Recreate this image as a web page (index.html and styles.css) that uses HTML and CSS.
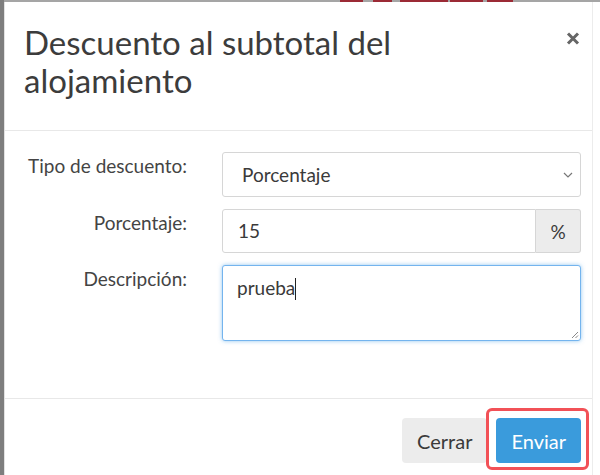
FILE: index.html
```html
<!DOCTYPE html>
<html lang="es">
<head>
  <meta charset="UTF-8" />
  <title>Descuento al subtotal del alojamiento</title>
  <link rel="stylesheet" href="styles.css">
</head>
<body>

<div class="page">
  <div class="backdrop-edge"></div>
  <div class="main">
    <div class="topline">
      <span class="seg" style="margin-left:336px;width:23px"></span>
      <span class="seg" style="margin-left:10px;width:19px"></span>
      <span class="seg" style="margin-left:8px;width:48px"></span>
      <span class="seg" style="margin-left:2px;width:33px"></span>
      <span class="seg" style="margin-left:4px;width:26px"></span>
    </div>

    <div class="modal">
      <div class="modal-header">
        <h4 class="modal-title">Descuento al subtotal del alojamiento</h4>
        <button class="close" type="button" aria-label="Cerrar">
          <svg width="14" height="13" viewBox="0 0 14 13">
            <path d="M2 1.5 L12 11.5 M12 1.5 L2 11.5" stroke="#666" stroke-width="3" fill="none" />
          </svg>
        </button>
      </div>

      <div class="modal-body">
        <label class="label">Tipo de descuento:</label>
        <div class="control select">
          <span>Porcentaje</span>
          <svg class="chevron" width="10" height="6" viewBox="0 0 10 6">
            <path d="M1 1 L5 5 L9 1" stroke="#777" stroke-width="1.2" fill="none" />
          </svg>
        </div>

        <label class="label">Porcentaje:</label>
        <div class="input-group">
          <div class="control input">15</div>
          <div class="addon">%</div>
        </div>

        <label class="label">Descripción:</label>
        <div class="control textarea">
          <span>prueba</span><span class="caret"></span>
          <svg class="grip" width="9" height="9" viewBox="0 0 9 9">
            <path d="M8 2 L2 8 M8 5.5 L5.5 8" stroke="#888" stroke-width="1" fill="none" />
          </svg>
        </div>
      </div>

      <div class="modal-footer">
        <button class="btn btn-default" type="button">Cerrar</button>
        <button class="btn btn-primary" type="button">Enviar<span class="highlight"></span></button>
      </div>
    </div>
  </div>
</div>

</body>
</html>
```

FILE: styles.css
```css
body {
  margin: 0;
  background: #fff;
  font-family: 'Lato', 'Open Sans', sans-serif;
  color: #444;
}
.page {
  display: flex;
  height: 475px;
  overflow: hidden;
}
.backdrop-edge {
  width: 4px;
  background: #7e7e7e;
  flex: none;
}
.main {
  flex: 1;
  display: flex;
  flex-direction: column;
}
.topline {
  height: 2px;
  background: #a5a5a5;
  display: flex;
  flex: none;
}
.seg {
  display: block;
  height: 2px;
  background: #9b2a35;
}
.modal {
  width: 587px;
  flex: 1;
  border-left: 1px solid #e2e2e2;
  border-right: 1px solid #ececec;
  background: #fff;
}
.modal-header {
  display: flex;
  justify-content: space-between;
  align-items: flex-start;
  padding: 21px 12px 31px 19px;
  border-bottom: 1px solid #e8e8e8;
}
.modal-title {
  margin: 0;
  max-width: 430px;
  font-size: 33px;
  line-height: 38px;
  font-weight: 400;
  color: #3c3c3c;
}
.close {
  border: none;
  background: none;
  padding: 0;
  margin-top: 9px;
  line-height: 0;
  cursor: pointer;
}
.modal-body {
  display: grid;
  grid-template-columns: 162px 359px;
  column-gap: 35px;
  row-gap: 12px;
  padding: 21px 12px 57px 20px;
}
.label {
  text-align: right;
  font-size: 19px;
  line-height: 22px;
  padding-top: 3px;
  color: #444;
}
.control {
  box-sizing: border-box;
  border: 1px solid #d6d6d6;
  border-radius: 3px;
  font-size: 19px;
  line-height: 22px;
  color: #3a3a3a;
  background: #fff;
}
.select {
  height: 45px;
  display: flex;
  align-items: center;
  justify-content: space-between;
  padding: 0 7px 0 19px;
}
.input-group {
  display: flex;
  height: 44px;
}
.input {
  flex: 1;
  display: flex;
  align-items: center;
  padding: 0 15px;
  border-radius: 3px 0 0 3px;
}
.addon {
  width: 45px;
  box-sizing: border-box;
  display: flex;
  align-items: center;
  justify-content: center;
  background: #ececec;
  border: 1px solid #d6d6d6;
  border-left: none;
  border-radius: 0 3px 3px 0;
  font-size: 19px;
  color: #3a3a3a;
}
.textarea {
  position: relative;
  height: 76px;
  padding: 11px 14px;
  border-color: #74b4ee;
  box-shadow: 0 0 4px rgba(102, 175, 233, 0.7);
}
.caret {
  display: inline-block;
  width: 1px;
  height: 22px;
  background: #222;
  vertical-align: -5px;
}
.grip {
  position: absolute;
  right: 1px;
  bottom: 1px;
}
.modal-footer {
  display: flex;
  justify-content: flex-end;
  gap: 9px;
  padding: 19px 11px 0 0;
  border-top: 1px solid #e8e8e8;
}
.btn {
  height: 45px;
  padding: 0 15px;
  border: none;
  border-radius: 4px;
  font-family: inherit;
  font-size: 20px;
  cursor: pointer;
}
.btn-default {
  background: #ececec;
  color: #3a3a3a;
}
.btn-primary {
  position: relative;
  background: #3a9bdc;
  color: #fff;
}
/* red annotation box drawn over the send button */
.highlight {
  position: absolute;
  top: -10px;
  left: -10px;
  right: -8px;
  bottom: -7px;
  border: 3px solid #f25157;
  border-radius: 6px;
}
```
